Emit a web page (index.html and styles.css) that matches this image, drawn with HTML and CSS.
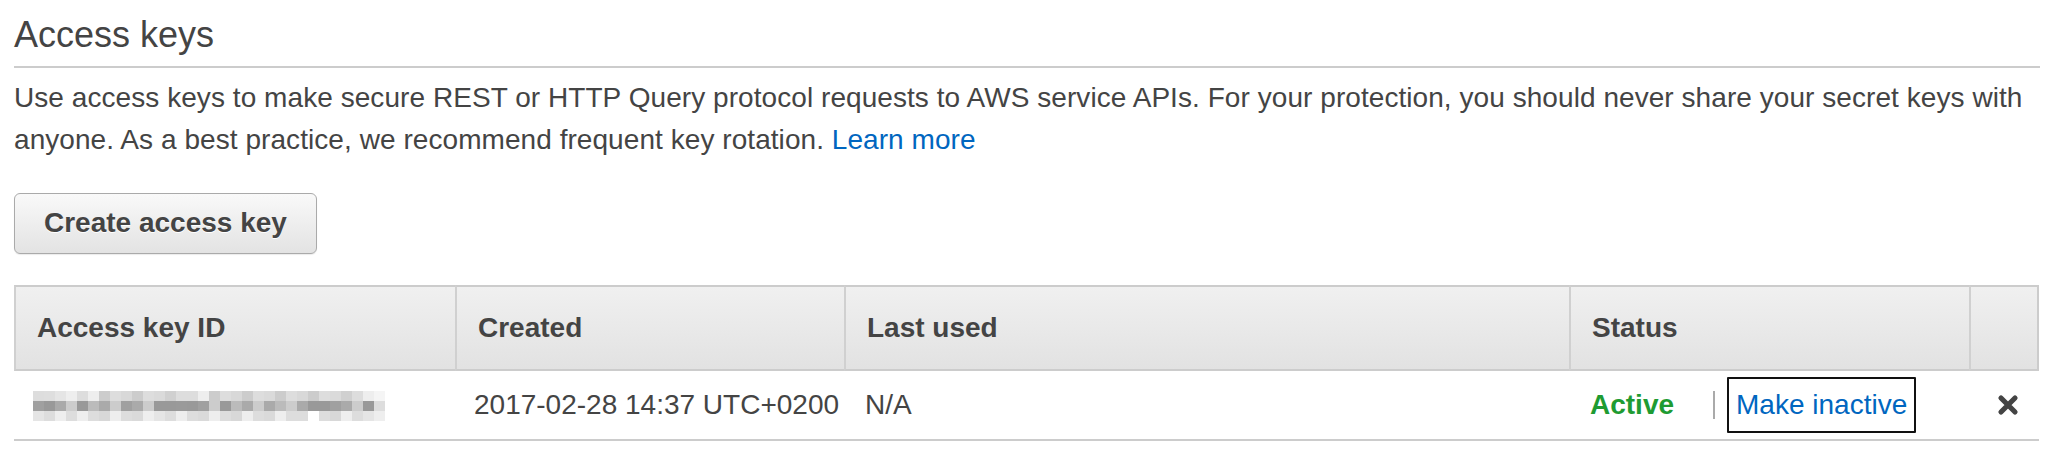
FILE: index.html
```html
<!DOCTYPE html>
<html lang="en">
<head>
<meta charset="utf-8">
<title>Access keys</title>
<link rel="stylesheet" href="styles.css">
</head>
<body>
<section class="panel">
  <h2 class="title">Access keys</h2>
  <p class="desc">Use access keys to make secure REST or HTTP Query protocol requests to AWS service APIs. For your protection, you should never share your secret keys with anyone. As a best practice, we recommend frequent key rotation. <a class="link" href="#">Learn more</a></p>
  <button class="btn" type="button">Create access key</button>
  <div class="table">
    <div class="th">Access key ID</div>
    <div class="th">Created</div>
    <div class="th">Last used</div>
    <div class="th">Status</div>
    <div class="th th-last"></div>

    <div class="td">
      <svg class="blur" width="352" height="30" viewBox="0 0 352 30" aria-hidden="true">
        <g>
          <rect x="0" y="0" width="11" height="10" fill="#dddddd"/><rect x="11" y="0" width="11" height="10" fill="#dedede"/><rect x="22" y="0" width="11" height="10" fill="#e5e5e5"/><rect x="33" y="0" width="11" height="10" fill="#eeeeee"/><rect x="44" y="0" width="11" height="10" fill="#dddddd"/><rect x="55" y="0" width="11" height="10" fill="#eeeeee"/><rect x="66" y="0" width="11" height="10" fill="#cccccc"/><rect x="77" y="0" width="11" height="10" fill="#dddddd"/><rect x="88" y="0" width="11" height="10" fill="#d8d8d8"/><rect x="99" y="0" width="11" height="10" fill="#cccccc"/><rect x="110" y="0" width="11" height="10" fill="#dddddd"/><rect x="121" y="0" width="11" height="10" fill="#dadada"/><rect x="132" y="0" width="11" height="10" fill="#d0d0d0"/><rect x="143" y="0" width="11" height="10" fill="#dddddd"/><rect x="154" y="0" width="11" height="10" fill="#dddddd"/><rect x="165" y="0" width="11" height="10" fill="#eeeeee"/><rect x="176" y="0" width="11" height="10" fill="#cccccc"/><rect x="187" y="0" width="11" height="10" fill="#dddddd"/><rect x="198" y="0" width="11" height="10" fill="#d8d8d8"/><rect x="209" y="0" width="11" height="10" fill="#cccccc"/><rect x="220" y="0" width="11" height="10" fill="#dddddd"/><rect x="231" y="0" width="11" height="10" fill="#dadada"/><rect x="242" y="0" width="11" height="10" fill="#cccccc"/><rect x="253" y="0" width="11" height="10" fill="#dddddd"/><rect x="264" y="0" width="11" height="10" fill="#d8d8d8"/><rect x="275" y="0" width="11" height="10" fill="#cccccc"/><rect x="286" y="0" width="11" height="10" fill="#dddddd"/><rect x="297" y="0" width="11" height="10" fill="#dadada"/><rect x="308" y="0" width="11" height="10" fill="#d0d0d0"/><rect x="319" y="0" width="11" height="10" fill="#dddddd"/><rect x="330" y="0" width="11" height="10" fill="#eeeeee"/><rect x="341" y="0" width="11" height="10" fill="#f5f5f5"/>
        </g>
        <g>
          <rect x="0" y="10" width="11" height="10" fill="#a0a0a0"/><rect x="11" y="10" width="11" height="10" fill="#999999"/><rect x="22" y="10" width="11" height="10" fill="#aaaaaa"/><rect x="33" y="10" width="11" height="10" fill="#cccccc"/><rect x="44" y="10" width="11" height="10" fill="#999999"/><rect x="55" y="10" width="11" height="10" fill="#bbbbbb"/><rect x="66" y="10" width="11" height="10" fill="#aaaaaa"/><rect x="77" y="10" width="11" height="10" fill="#cccccc"/><rect x="88" y="10" width="11" height="10" fill="#a0a0a0"/><rect x="99" y="10" width="11" height="10" fill="#aaaaaa"/><rect x="110" y="10" width="11" height="10" fill="#cccccc"/><rect x="121" y="10" width="11" height="10" fill="#999999"/><rect x="132" y="10" width="11" height="10" fill="#999999"/><rect x="143" y="10" width="11" height="10" fill="#9a9a9a"/><rect x="154" y="10" width="11" height="10" fill="#999999"/><rect x="165" y="10" width="11" height="10" fill="#a0a0a0"/><rect x="176" y="10" width="11" height="10" fill="#cccccc"/><rect x="187" y="10" width="11" height="10" fill="#999999"/><rect x="198" y="10" width="11" height="10" fill="#bbbbbb"/><rect x="209" y="10" width="11" height="10" fill="#aaaaaa"/><rect x="220" y="10" width="11" height="10" fill="#cccccc"/><rect x="231" y="10" width="11" height="10" fill="#aaaaaa"/><rect x="242" y="10" width="11" height="10" fill="#bbbbbb"/><rect x="253" y="10" width="11" height="10" fill="#cccccc"/><rect x="264" y="10" width="11" height="10" fill="#aaaaaa"/><rect x="275" y="10" width="11" height="10" fill="#999999"/><rect x="286" y="10" width="11" height="10" fill="#999999"/><rect x="297" y="10" width="11" height="10" fill="#a0a0a0"/><rect x="308" y="10" width="11" height="10" fill="#aaaaaa"/><rect x="319" y="10" width="11" height="10" fill="#cccccc"/><rect x="330" y="10" width="11" height="10" fill="#999999"/><rect x="341" y="10" width="11" height="10" fill="#dddddd"/>
        </g>
        <g>
          <rect x="0" y="20" width="11" height="10" fill="#e5e5e5"/><rect x="11" y="20" width="11" height="10" fill="#dddddd"/><rect x="22" y="20" width="11" height="10" fill="#eeeeee"/><rect x="33" y="20" width="11" height="10" fill="#dddddd"/><rect x="44" y="20" width="11" height="10" fill="#eeeeee"/><rect x="55" y="20" width="11" height="10" fill="#dddddd"/><rect x="66" y="20" width="11" height="10" fill="#d8d8d8"/><rect x="77" y="20" width="11" height="10" fill="#eeeeee"/><rect x="88" y="20" width="11" height="10" fill="#dddddd"/><rect x="99" y="20" width="11" height="10" fill="#dadada"/><rect x="110" y="20" width="11" height="10" fill="#eeeeee"/><rect x="121" y="20" width="11" height="10" fill="#e5e5e5"/><rect x="132" y="20" width="11" height="10" fill="#dddddd"/><rect x="143" y="20" width="11" height="10" fill="#eeeeee"/><rect x="154" y="20" width="11" height="10" fill="#dddddd"/><rect x="165" y="20" width="11" height="10" fill="#dadada"/><rect x="176" y="20" width="11" height="10" fill="#eeeeee"/><rect x="187" y="20" width="11" height="10" fill="#dddddd"/><rect x="198" y="20" width="11" height="10" fill="#d8d8d8"/><rect x="209" y="20" width="11" height="10" fill="#eeeeee"/><rect x="220" y="20" width="11" height="10" fill="#dddddd"/><rect x="231" y="20" width="11" height="10" fill="#dadada"/><rect x="242" y="20" width="11" height="10" fill="#eeeeee"/><rect x="253" y="20" width="11" height="10" fill="#dddddd"/><rect x="264" y="20" width="11" height="10" fill="#dddddd"/><rect x="275" y="20" width="11" height="10" fill="#ffffff"/><rect x="286" y="20" width="11" height="10" fill="#dddddd"/><rect x="297" y="20" width="11" height="10" fill="#d8d8d8"/><rect x="308" y="20" width="11" height="10" fill="#eeeeee"/><rect x="319" y="20" width="11" height="10" fill="#dddddd"/><rect x="330" y="20" width="11" height="10" fill="#e5e5e5"/><rect x="341" y="20" width="11" height="10" fill="#eeeeee"/>
        </g>
      </svg>
    </div>
    <div class="td">2017-02-28 14:37 UTC+0200</div>
    <div class="td td-tight">N/A</div>
    <div class="td td-status">
      <span class="active">Active</span>
      <span class="sep"></span>
      <a class="action" href="#">Make inactive</a>
    </div>
    <div class="td td-icon">
      <svg class="x" width="22" height="22" viewBox="0 0 22 22" aria-hidden="true">
        <path d="M4 4 L18 18 M18 4 L4 18" stroke="#444" stroke-width="5.2" stroke-linecap="round" fill="none"/>
      </svg>
    </div>
  </div>
</section>
</body>
</html>
```

FILE: styles.css
```css
* { box-sizing: border-box; }

html, body {
  margin: 0;
  padding: 0;
  background: #ffffff;
}

body {
  font-family: "Liberation Sans", Arial, Helvetica, sans-serif;
  color: #444444;
  width: 2048px;
  height: 452px;
  overflow: hidden;
}

.panel {
  padding: 15px 8px 0 14px;
  display: flex;
  flex-direction: column;
  align-items: flex-start;
}

.title {
  margin: 0;
  width: 100%;
  font-size: 36px;
  font-weight: normal;
  line-height: 40px;
  color: #444444;
  padding-bottom: 11px;
  border-bottom: 2px solid #cccccc;
}

.desc {
  margin: 9px 0 0 0;
  font-size: 28px;
  line-height: 42px;
  letter-spacing: 0.06px;
  color: #444444;
}

.link {
  color: #0066c0;
  text-decoration: none;
}

.btn {
  margin-top: 32px;
  font-family: "Liberation Sans", Arial, Helvetica, sans-serif;
  font-size: 28px;
  font-weight: bold;
  line-height: 32px;
  color: #444444;
  text-shadow: 0 1px 0 #ffffff;
  padding: 13px 29px 14px 29px;
  border: 1px solid #aaaaaa;
  border-radius: 6px;
  background: linear-gradient(#f9f9f9, #e3e3e3);
  box-shadow: 0 1px 1px rgba(0, 0, 0, 0.08);
}

.table {
  margin-top: 31px;
  display: grid;
  grid-template-columns: 441px 389px 725px 400px 70px;
  width: 2025px;
}

.th {
  height: 86px;
  display: flex;
  align-items: center;
  padding: 0 21px;
  font-size: 28px;
  font-weight: bold;
  line-height: 32px;
  color: #444444;
  background: linear-gradient(#f0f0f0, #e2e2e2);
  border-top: 2px solid #cccccc;
  border-bottom: 2px solid #cccccc;
  border-left: 2px solid #d0d0d0;
}

.th-last {
  border-right: 2px solid #cccccc;
}

.td {
  height: 70px;
  display: flex;
  align-items: center;
  padding: 0 19px;
  font-size: 28px;
  line-height: 32px;
  color: #444444;
  border-bottom: 2px solid #cccccc;
  white-space: nowrap;
}

.td-tight {
  padding-left: 21px;
}

.blur {
  display: block;
  margin-top: 2px;
}

.td-status {
  padding-left: 21px;
}

.active {
  color: #1e9b32;
  font-weight: bold;
}

.sep {
  display: inline-block;
  width: 2px;
  height: 28px;
  background: #aaaaaa;
  margin-left: 39px;
  margin-right: 12px;
}

.action {
  color: #0066c0;
  text-decoration: none;
  border: 2px solid #111111;
  padding: 10px 7px;
  border-radius: 1px;
}

.td-icon {
  justify-content: center;
  padding: 0 0 0 8px;
}

.x {
  display: block;
}
```
